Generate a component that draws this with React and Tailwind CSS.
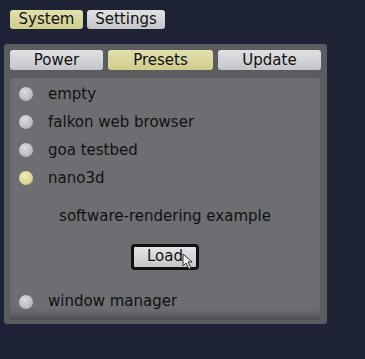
const presets = [
  { name: "empty", active: false },
  { name: "falkon web browser", active: false },
  { name: "goa testbed", active: false },
  { name: "nano3d", active: true },
];

function Dot({ active }) {
  return (
    <span
      className={
        active
          ? "h-[14px] w-[14px] shrink-0 rounded-full bg-[radial-gradient(circle_at_40%_35%,#f2efb4,#d3d08a_70%,#b9b672)]"
          : "h-[14px] w-[14px] shrink-0 rounded-full bg-[radial-gradient(circle_at_40%_35%,#dcdddf,#b6b7ba_70%,#9e9fa2)]"
      }
    />
  );
}

function Btn({ label, active, className = "" }) {
  return (
    <div
      className={`flex items-center justify-center rounded-[3px] text-[15px] leading-none text-[#111] ${
        active
          ? "bg-[linear-gradient(#e2e0ad,#cfcc8c)]"
          : "bg-[linear-gradient(#e0e1e3,#c3c5c8)]"
      } ${className}`}
    >
      {label}
    </div>
  );
}

function Row({ name, active }) {
  return (
    <div className="flex h-[28px] items-center pl-[9px]">
      <Dot active={active} />
      <span className="ml-[15px] text-[15px] text-[#111]">{name}</span>
    </div>
  );
}

export default function App() {
  return (
    <div
      className="relative h-[359px] w-[365px] overflow-hidden bg-[#1d2335]"
      style={{ fontFamily: '"DejaVu Sans", sans-serif' }}
    >
      <div className="flex gap-[4px] pl-[10px] pt-[10px]">
        <Btn label="System" active className="h-[19px] w-[73px]" />
        <Btn label="Settings" className="h-[19px] w-[78px]" />
      </div>

      <div className="ml-[4px] mt-[15px] h-[280px] w-[323px] rounded-[3px] bg-[#5b5c60] p-[6px]">
        <div className="flex gap-[5px]">
          <Btn label="Power" className="h-[20px] w-[93px]" />
          <Btn label="Presets" active className="h-[20px] w-[105px]" />
          <Btn label="Update" className="h-[20px] w-[103px]" />
        </div>

        <div className="mt-[8px] flex h-[242px] w-[310px] flex-col rounded-[2px] bg-[#6d6e72] pt-[2px] shadow-[inset_0_-10px_8px_-6px_rgba(0,0,0,0.35)]">
          {presets.map((p) => (
            <Row key={p.name} name={p.name} active={p.active} />
          ))}

          <div className="mt-[13px] text-center text-[15px] text-[#111]">software-rendering example</div>

          <div className="mt-[16px] flex justify-center">
            <div className="relative flex h-[26px] w-[68px] items-center justify-center rounded-[4px] border-[3px] border-[#111] bg-[linear-gradient(#e4e5e7,#c4c6c9)] text-[15px] text-[#111]">
              Load
              <svg className="absolute left-[48px] top-[6px]" width="14" height="18" viewBox="0 0 14 18">
                <path d="M1 1 L1 13 L4 10 L7 16 L9 15 L6 9 L10 9 Z" fill="#eee" stroke="#333" strokeWidth="1" />
              </svg>
            </div>
          </div>

          <div className="mt-[18px]">
            <Row name="window manager" active={false} />
          </div>
        </div>
      </div>
    </div>
  );
}
